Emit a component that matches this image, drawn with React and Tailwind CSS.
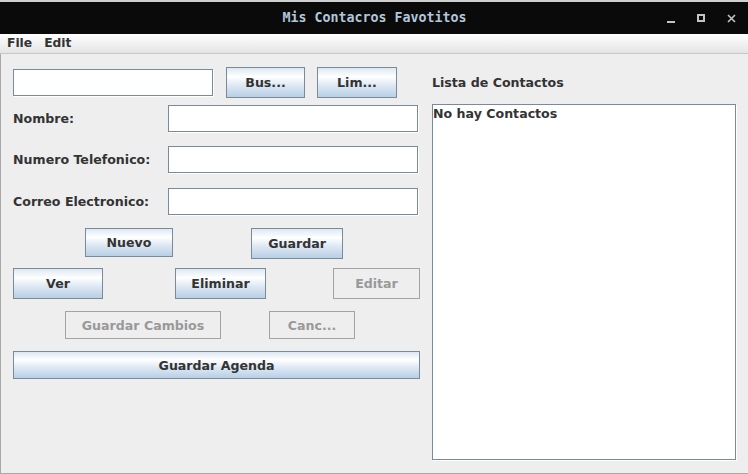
import React from "react";

const font = { fontFamily: '"DejaVu Sans", "Liberation Sans", sans-serif' };

function Btn({ className, children, disabled }) {
  return (
    <div
      className={
        "flex items-center justify-center border pt-[2px] text-[12.6px] font-bold leading-none " +
        (disabled
          ? "border-[#a3a3a3] bg-[#eeeeee] text-[#999999] "
          : "border-[#7a8a99] bg-[linear-gradient(to_bottom,#dde8f3_0%,#ffffff_30%,#dde8f3_60%,#b8cfe5_100%)] text-[#333333] ") +
        className
      }
    >
      {children}
    </div>
  );
}

function Field({ className }) {
  return (
    <div
      className={
        "border border-[#7a8a99] bg-white shadow-[1px_1px_0_#ffffff] " + className
      }
    />
  );
}

export default function App() {
  return (
    <div
      style={font}
      className="w-[748px] h-[474px] bg-[#eeeeee] flex flex-col overflow-hidden"
    >
      <div className="h-[2px] bg-[#cfcfcf] shrink-0" />
      <div className="h-[32px] shrink-0 bg-[#0a0a0a] relative flex items-center justify-center">
        <span
          className="text-[13.3px] font-bold text-[#b3c6d9] leading-none ml-[1px]"
          style={{ fontFamily: '"DejaVu Sans Mono", "Liberation Mono", monospace' }}
        >
          Mis Contacros Favotitos
        </span>
        <div className="absolute right-[12px] top-0 h-full flex items-center gap-[21px]">
          <svg width="9" height="9" viewBox="0 0 9 9">
            <rect x="0" y="7" width="8" height="2" fill="#c4c4c4" />
          </svg>
          <svg width="9" height="9" viewBox="0 0 9 9">
            <rect x="1" y="1" width="6" height="6" fill="none" stroke="#c4c4c4" strokeWidth="2" />
          </svg>
          <svg width="9" height="9" viewBox="0 0 9 9">
            <path d="M1 1 L8 8 M8 1 L1 8" stroke="#c4c4c4" strokeWidth="1.6" />
          </svg>
        </div>
      </div>
      <div className="h-[20px] shrink-0 bg-gradient-to-b from-[#ffffff] to-[#e4e4e4] border-b border-[#c6c6c6] flex items-center pl-[7px] gap-[12px] text-[12.3px] font-bold text-[#333333]">
        <span>File</span>
        <span>Edit</span>
      </div>
      <div className="flex-1 flex border-l border-[#a8a8a8] border-b border-b-[#a8a8a8]">
        <div className="w-[421px] pl-[12px] flex flex-col text-[12.6px] font-bold text-[#333333]">
          <div className="mt-[13px] h-[31px] flex items-start">
            <Field className="w-[200px] h-[27px] mt-[2px]" />
            <Btn className="ml-[13px] w-[79px] h-[31px]">Bus...</Btn>
            <Btn className="ml-[12px] w-[80px] h-[31px]">Lim...</Btn>
          </div>
          <div className="mt-[7px] h-[27px] flex items-center">
            <span className="w-[155px] pt-[2px]">Nombre:</span>
            <Field className="w-[250px] h-[27px]" />
          </div>
          <div className="mt-[14px] h-[27px] flex items-center">
            <span className="w-[155px] pt-[2px]">Numero Telefonico:</span>
            <Field className="w-[250px] h-[27px]" />
          </div>
          <div className="mt-[15px] h-[27px] flex items-center">
            <span className="w-[155px] pt-[2px]">Correo Electronico:</span>
            <Field className="w-[250px] h-[27px]" />
          </div>
          <div className="mt-[13px] h-[31px] flex items-start">
            <Btn className="ml-[72px] w-[88px] h-[29px]">Nuevo</Btn>
            <Btn className="ml-[78px] w-[92px] h-[31px]">Guardar</Btn>
          </div>
          <div className="mt-[9px] h-[31px] flex items-start">
            <Btn className="w-[90px] h-[31px]">Ver</Btn>
            <Btn className="ml-[72px] w-[91px] h-[31px]">Eliminar</Btn>
            <Btn disabled className="ml-[67px] w-[87px] h-[31px]">Editar</Btn>
          </div>
          <div className="mt-[12px] h-[28px] flex items-start">
            <Btn disabled className="ml-[52px] w-[156px] h-[28px]">Guardar Cambios</Btn>
            <Btn disabled className="ml-[48px] w-[86px] h-[28px]">Canc...</Btn>
          </div>
          <div className="mt-[12px] h-[28px] flex items-start">
            <Btn className="w-[407px] h-[28px]">Guardar Agenda</Btn>
          </div>
        </div>
        <div className="flex flex-col pl-[10px] text-[12.6px] font-bold text-[#333333]">
          <div className="mt-[21px] h-[16px] flex items-center">Lista de Contactos</div>
          <div className="mt-[13px] w-[304px] h-[356px] border border-[#7a8a99] bg-white shadow-[1px_1px_0_#ffffff] pt-[1px]">
            <div className="leading-[15px]">No hay Contactos</div>
          </div>
        </div>
      </div>
    </div>
  );
}
